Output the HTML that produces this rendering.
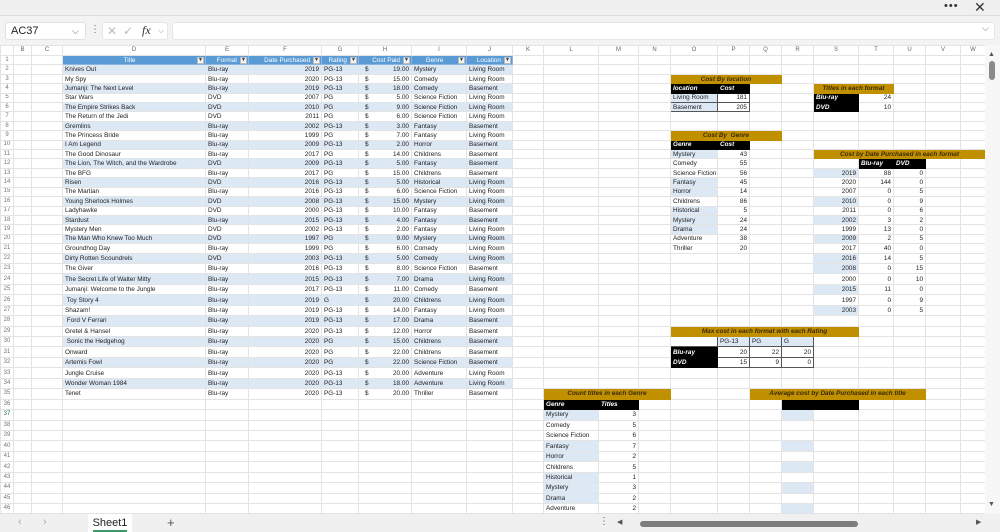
<!DOCTYPE html>
<html><head><meta charset="utf-8"><style>
*{margin:0;padding:0;box-sizing:border-box}
body{width:1000px;height:532px;overflow:hidden;background:#f3f3f3;font-family:"Liberation Sans",sans-serif;position:relative}
.top{position:absolute;left:0;top:0;width:1000px;height:16px;background:#f0f0f0;border-bottom:1px solid #dcdcdc}
.fb{position:absolute;top:17px;left:0;width:1000px;height:28px;background:#f3f3f3}
.nb{position:absolute;left:5px;top:5px;width:81px;height:18px;background:#fff;border:1px solid #e0e0e0;border-radius:3px;font-size:11px;line-height:16px;padding-left:5px;color:#222}
.fx{position:absolute;left:102px;top:5px;width:66px;height:18px;background:#fff;border:1px solid #e6e6e6;border-radius:3px;color:#bbb;font-size:12px;line-height:16px}
.fi{position:absolute;left:172px;top:5px;width:823px;height:18px;background:#fff;border:1px solid #e6e6e6;border-radius:3px}
table{position:absolute;left:0;top:45px;width:985px;table-layout:fixed;border-collapse:collapse;background:#fff}
td,th{border:1px solid #e3e3e3;font-size:6.4px;line-height:7px;padding:0 2px;white-space:nowrap;overflow:hidden;color:#222;font-weight:normal;vertical-align:middle;text-align:left}
th{color:#777;text-align:center;padding:0;font-size:6px}
tr.h{height:10px}
tr.h th{color:#666}
tr.a{height:9.42px}
tr{height:10.44px}
tr.bd>:nth-child(n+4):nth-child(-n+10){background:#dde8f5}
tr.dt>:nth-child(6),tr.dt>:nth-child(8){text-align:right}
s{float:left;text-decoration:none;padding-left:4px}
.hd{background:#5b9bd5!important;color:#fff;position:relative;text-align:right;padding-right:11px;border-color:#8cb6e0}
.hd i{position:absolute;right:1px;top:1px;width:7px;height:7px;background:#f4f4f4;border:1px solid #bbb;font-style:normal;color:#333;font-size:5px;line-height:5px;text-align:center}
.g{background:#c09000;color:#3b2a00;font-style:italic;font-weight:bold;text-align:center;border-color:#c09000}
.k{background:#000;color:#fff;font-style:italic;font-weight:bold;border-color:#000}
.lb{background:#dde8f5}
.r{text-align:right}
.bx{border:1px solid #555}
.vs{position:absolute;left:985px;top:45px;width:15px;height:470px;background:#f7f7f7}
.tb{position:absolute;left:0;top:514px;width:1000px;height:18px;background:#f0f0f0}
</style></head><body>
<div class="top"><span style="position:absolute;left:944px;top:0;font-size:11px;color:#333;letter-spacing:1px">•••</span><span style="position:absolute;left:974px;top:-1px;font-size:14px;color:#333">✕</span></div>
<div class="fb">
<div class="nb">AC37<span style="position:absolute;left:66px;top:0;font-size:9px;color:#555">⌵</span></div>
<span style="position:absolute;left:90px;top:7px;font-size:10px;color:#666">⋮</span>
<div class="fx"><span style="position:absolute;left:4px;top:0">✕</span><span style="position:absolute;left:20px;top:0">✓</span><span style="position:absolute;left:39px;top:-1px;color:#333;font-family:'Liberation Serif',serif;font-style:italic;font-size:12px">fx</span><span style="position:absolute;left:55px;top:0;font-size:8px;color:#999">⌵</span></div>
<div class="fi"><span style="position:absolute;right:5px;top:0;font-size:9px;color:#666">⌵</span></div>
</div>
<table>
<colgroup><col style="width:13px"><col style="width:18px"><col style="width:31px"><col style="width:143px"><col style="width:43px"><col style="width:73px"><col style="width:37px"><col style="width:53px"><col style="width:55px"><col style="width:46px"><col style="width:31px"><col style="width:55px"><col style="width:40px"><col style="width:32px"><col style="width:47px"><col style="width:32px"><col style="width:32px"><col style="width:32px"><col style="width:45px"><col style="width:35px"><col style="width:32px"><col style="width:35px"><col style="width:25px"></colgroup>
<tr class="h"><th><th>B<th>C<th>D<th>E<th>F<th>G<th>H<th>I<th>J<th>K<th>L<th>M<th>N<th>O<th>P<th>Q<th>R<th>S<th>T<th>U<th>V<th>W</tr>
<tr class="a"><th>1<td><td><td class="hd" style="text-align:center">Title<i>▼</i><td class="hd">Format<i>▼</i><td class="hd">Date Purchased<i>▼</i><td class="hd">Rating<i>▼</i><td class="hd">Cost Paid<i>▼</i><td class="hd" style="text-align:center">Genre<i>▼</i><td class="hd">Location<i>▼</i><td><td><td><td><td><td><td><td><td><td><td><td><td></tr>
<tr class="a dt bd"><th>2<td><td><td>Knives Out<td>Blu-ray<td>2019<td>PG-13<td><s>$</s>19.00<td>Mystery<td>Living Room<td><td><td><td><td><td><td><td><td><td><td><td><td></tr>
<tr class="a dt"><th>3<td><td><td>My Spy<td>Blu-ray<td>2020<td>PG-13<td><s>$</s>15.00<td>Comedy<td>Living Room<td><td><td><td><td class="g" colspan="3">Cost By location<td><td><td><td><td><td></tr>
<tr class="a dt bd"><th>4<td><td><td>Jumanji: The Next Level<td>Blu-ray<td>2019<td>PG-13<td><s>$</s>18.00<td>Comedy<td>Basement<td><td><td><td><td class="k">location<td class="k">Cost<td><td><td class="g" colspan="2">Titles in each format<td><td><td></tr>
<tr class="a dt"><th>5<td><td><td>Star Wars<td>DVD<td>2007<td>PG<td><s>$</s>5.00<td>Science Fiction<td>Living Room<td><td><td><td><td class="lb bx">Living Room<td class="bx r">181<td><td><td class="k">Blu-ray<td class="r">24<td><td><td></tr>
<tr class="a dt bd"><th>6<td><td><td>The Empire Strikes Back<td>DVD<td>2010<td>PG<td><s>$</s>9.00<td>Science Fiction<td>Living Room<td><td><td><td><td class="lb bx">Basement<td class="bx r">205<td><td><td class="k">DVD<td class="r">10<td><td><td></tr>
<tr class="a dt"><th>7<td><td><td>The Return of the Jedi<td>DVD<td>2011<td>PG<td><s>$</s>6.00<td>Science Fiction<td>Living Room<td><td><td><td><td><td><td><td><td><td><td><td><td></tr>
<tr class="a dt bd"><th>8<td><td><td>Gremlins<td>Blu-ray<td>2002<td>PG-13<td><s>$</s>3.00<td>Fantasy<td>Basement<td><td><td><td><td><td><td><td><td><td><td><td><td></tr>
<tr class="a dt"><th>9<td><td><td>The Princess Bride<td>Blu-ray<td>1999<td>PG<td><s>$</s>7.00<td>Fantasy<td>Living Room<td><td><td><td><td class="g" colspan="3">Cost By &nbsp;Genre<td><td><td><td><td><td></tr>
<tr class="a dt bd"><th>10<td><td><td>I Am Legend<td>Blu-ray<td>2009<td>PG-13<td><s>$</s>2.00<td>Horror<td>Basement<td><td><td><td><td class="k">Genre<td class="k">Cost<td><td><td><td><td><td><td></tr>
<tr class="a dt"><th>11<td><td><td>The Good Dinosaur<td>Blu-ray<td>2017<td>PG<td><s>$</s>14.00<td>Childrens<td>Basement<td><td><td><td><td class="lb">Mystery<td class="r">43<td><td><td class="g" colspan="5">Cost by Date Purchased in each format</tr>
<tr class="a dt bd"><th>12<td><td><td>The Lion, The Witch, and the Wardrobe<td>DVD<td>2009<td>PG-13<td><s>$</s>5.00<td>Fantasy<td>Basement<td><td><td><td><td>Comedy<td class="r">55<td><td><td><td class="k">Blu-ray<td class="k">DVD<td><td></tr>
<tr class="a dt"><th>13<td><td><td>The BFG<td>Blu-ray<td>2017<td>PG<td><s>$</s>15.00<td>Childrens<td>Basement<td><td><td><td><td>Science Fiction<td class="r">56<td><td><td class="lb r">2019<td class="r">88<td class="r">0<td><td></tr>
<tr class="a dt bd"><th>14<td><td><td>Risen<td>DVD<td>2016<td>PG-13<td><s>$</s>5.00<td>Historical<td>Living Room<td><td><td><td><td class="lb">Fantasy<td class="r">45<td><td><td class="r">2020<td class="r">144<td class="r">0<td><td></tr>
<tr class="a dt"><th>15<td><td><td>The Martian<td>Blu-ray<td>2016<td>PG-13<td><s>$</s>6.00<td>Science Fiction<td>Living Room<td><td><td><td><td class="lb">Horror<td class="r">14<td><td><td class="r">2007<td class="r">0<td class="r">5<td><td></tr>
<tr class="a dt bd"><th>16<td><td><td>Young Sherlock Holmes<td>DVD<td>2008<td>PG-13<td><s>$</s>15.00<td>Mystery<td>Living Room<td><td><td><td><td>Childrens<td class="r">86<td><td><td class="lb r">2010<td class="r">0<td class="r">9<td><td></tr>
<tr class="a dt"><th>17<td><td><td>Ladyhawke<td>DVD<td>2000<td>PG-13<td><s>$</s>10.00<td>Fantasy<td>Basement<td><td><td><td><td class="lb">Historical<td class="r">5<td><td><td class="r">2011<td class="r">0<td class="r">6<td><td></tr>
<tr class="a dt bd"><th>18<td><td><td>Stardust<td>Blu-ray<td>2015<td>PG-13<td><s>$</s>4.00<td>Fantasy<td>Basement<td><td><td><td><td class="lb">Mystery<td class="r">24<td><td><td class="lb r">2002<td class="r">3<td class="r">2<td><td></tr>
<tr class="a dt"><th>19<td><td><td>Mystery Men<td>DVD<td>2002<td>PG-13<td><s>$</s>2.00<td>Fantasy<td>Living Room<td><td><td><td><td class="lb">Drama<td class="r">24<td><td><td class="r">1999<td class="r">13<td class="r">0<td><td></tr>
<tr class="a dt bd"><th>20<td><td><td>The Man Who Knew Too Much<td>DVD<td>1997<td>PG<td><s>$</s>9.00<td>Mystery<td>Living Room<td><td><td><td><td>Adventure<td class="r">38<td><td><td class="lb r">2009<td class="r">2<td class="r">5<td><td></tr>
<tr class="a dt"><th>21<td><td><td>Groundhog Day<td>Blu-ray<td>1999<td>PG<td><s>$</s>6.00<td>Comedy<td>Living Room<td><td><td><td><td>Thriller<td class="r">20<td><td><td class="r">2017<td class="r">40<td class="r">0<td><td></tr>
<tr class="dt bd"><th>22<td><td><td>Dirty Rotten Scoundrels<td>DVD<td>2003<td>PG-13<td><s>$</s>5.00<td>Comedy<td>Living Room<td><td><td><td><td><td><td><td><td class="lb r">2016<td class="r">14<td class="r">5<td><td></tr>
<tr class="dt"><th>23<td><td><td>The Giver<td>Blu-ray<td>2016<td>PG-13<td><s>$</s>8.00<td>Science Fiction<td>Basement<td><td><td><td><td><td><td><td><td class="lb r">2008<td class="r">0<td class="r">15<td><td></tr>
<tr class="dt bd"><th>24<td><td><td>The Secret Life of Walter Mitty<td>Blu-ray<td>2015<td>PG-13<td><s>$</s>7.00<td>Drama<td>Living Room<td><td><td><td><td><td><td><td><td class="r">2000<td class="r">0<td class="r">10<td><td></tr>
<tr class="dt"><th>25<td><td><td>Jumanji: Welcome to the Jungle<td>Blu-ray<td>2017<td>PG-13<td><s>$</s>11.00<td>Comedy<td>Basement<td><td><td><td><td><td><td><td><td class="lb r">2015<td class="r">11<td class="r">0<td><td></tr>
<tr class="dt bd"><th>26<td><td><td>&nbsp;Toy Story 4<td>Blu-ray<td>2019<td>G<td><s>$</s>20.00<td>Childrens<td>Living Room<td><td><td><td><td><td><td><td><td class="r">1997<td class="r">0<td class="r">9<td><td></tr>
<tr class="dt"><th>27<td><td><td>Shazam!<td>Blu-ray<td>2019<td>PG-13<td><s>$</s>14.00<td>Fantasy<td>Living Room<td><td><td><td><td><td><td><td><td class="lb r">2003<td class="r">0<td class="r">5<td><td></tr>
<tr class="dt bd"><th>28<td><td><td>&nbsp;Ford V Ferrari<td>Blu-ray<td>2019<td>PG-13<td><s>$</s>17.00<td>Drama<td>Basement<td><td><td><td><td><td><td><td><td><td><td><td><td></tr>
<tr class="dt"><th>29<td><td><td>Gretel &amp; Hansel<td>Blu-ray<td>2020<td>PG-13<td><s>$</s>12.00<td>Horror<td>Basement<td><td><td><td><td class="g" colspan="5">Max cost in each format with each Rating<td><td><td><td></tr>
<tr class="dt bd"><th>30<td><td><td>&nbsp;Sonic the Hedgehog<td>Blu-ray<td>2020<td>PG<td><s>$</s>15.00<td>Childrens<td>Basement<td><td><td><td><td class="bx"><td class="lb bx">PG-13<td class="lb bx">PG<td class="lb bx">G<td><td><td><td><td></tr>
<tr class="dt"><th>31<td><td><td>Onward<td>Blu-ray<td>2020<td>PG<td><s>$</s>22.00<td>Childrens<td>Basement<td><td><td><td><td class="k">Blu-ray<td class="bx r">20<td class="bx r">22<td class="bx r">20<td><td><td><td><td></tr>
<tr class="dt bd"><th>32<td><td><td>Artemis Fowl<td>Blu-ray<td>2020<td>PG<td><s>$</s>22.00<td>Science Fiction<td>Basement<td><td><td><td><td class="k">DVD<td class="bx r">15<td class="bx r">9<td class="bx r">0<td><td><td><td><td></tr>
<tr class="dt"><th>33<td><td><td>Jungle Cruise<td>Blu-ray<td>2020<td>PG-13<td><s>$</s>20.00<td>Adventure<td>Living Room<td><td><td><td><td><td><td><td><td><td><td><td><td></tr>
<tr class="dt bd"><th>34<td><td><td>Wonder Woman 1984<td>Blu-ray<td>2020<td>PG-13<td><s>$</s>18.00<td>Adventure<td>Living Room<td><td><td><td><td><td><td><td><td><td><td><td><td></tr>
<tr class="dt"><th>35<td><td><td>Tenet<td>Blu-ray<td>2020<td>PG-13<td><s>$</s>20.00<td>Thriller<td>Basement<td><td class="g" colspan="3">Count titles in each Genre<td><td><td class="g" colspan="5">Average cost by Date Purchased in each title<td><td></tr>
<tr><th>36<td><td><td><td><td><td><td><td><td><td><td class="k">Genre<td class="k">Titles<td><td><td><td><td class="k" colspan="2"><td><td><td><td></tr>
<tr><th style="color:#217346">37<td><td><td><td><td><td><td><td><td><td><td class="lb">Mystery<td class="r">3<td><td><td><td><td class="lb"><td><td><td><td><td></tr>
<tr><th>38<td><td><td><td><td><td><td><td><td><td><td>Comedy<td class="r">5<td><td><td><td><td><td><td><td><td><td></tr>
<tr><th>39<td><td><td><td><td><td><td><td><td><td><td>Science Fiction<td class="r">6<td><td><td><td><td><td><td><td><td><td></tr>
<tr><th>40<td><td><td><td><td><td><td><td><td><td><td class="lb">Fantasy<td class="r">7<td><td><td><td><td class="lb"><td><td><td><td><td></tr>
<tr><th>41<td><td><td><td><td><td><td><td><td><td><td class="lb">Horror<td class="r">2<td><td><td><td><td><td><td><td><td><td></tr>
<tr><th>42<td><td><td><td><td><td><td><td><td><td><td>Childrens<td class="r">5<td><td><td><td><td class="lb"><td><td><td><td><td></tr>
<tr><th>43<td><td><td><td><td><td><td><td><td><td><td class="lb">Historical<td class="r">1<td><td><td><td><td><td><td><td><td><td></tr>
<tr><th>44<td><td><td><td><td><td><td><td><td><td><td class="lb">Mystery<td class="r">3<td><td><td><td><td class="lb"><td><td><td><td><td></tr>
<tr><th>45<td><td><td><td><td><td><td><td><td><td><td class="lb">Drama<td class="r">2<td><td><td><td><td><td><td><td><td><td></tr>
<tr><th>46<td><td><td><td><td><td><td><td><td><td><td>Adventure<td class="r">2<td><td><td><td><td class="lb"><td><td><td><td><td></tr>
</table>
<div class="vs"><span style="position:absolute;left:3px;top:6px;font-size:7px;color:#555">▲</span><div style="position:absolute;left:4px;top:16px;width:6px;height:19px;background:#8a8a8a;border-radius:3px"></div><span style="position:absolute;left:3px;top:456px;font-size:7px;color:#555">▼</span></div>
<div class="tb">
<span style="position:absolute;left:18px;top:2px;font-size:11px;color:#aaa">‹</span><span style="position:absolute;left:43px;top:2px;font-size:11px;color:#aaa">›</span>
<div style="position:absolute;left:88px;top:0;width:44px;height:18px;background:#fff;font-size:11px;color:#222;text-align:center;line-height:18px">Sheet1<div style="position:absolute;left:5px;bottom:0;width:34px;height:2px;background:#3a9a6a"></div></div>
<span style="position:absolute;left:167px;top:1px;font-size:13px;color:#555">+</span>
<span style="position:absolute;left:599px;top:2px;font-size:10px;color:#555">⋮</span>
<span style="position:absolute;left:617px;top:4px;font-size:7px;color:#555">◀</span>
<div style="position:absolute;left:640px;top:7px;width:218px;height:6px;background:#7d7d7d;border-radius:3px"></div>
<span style="position:absolute;left:976px;top:4px;font-size:7px;color:#555">▶</span>
</div>
</body></html>
